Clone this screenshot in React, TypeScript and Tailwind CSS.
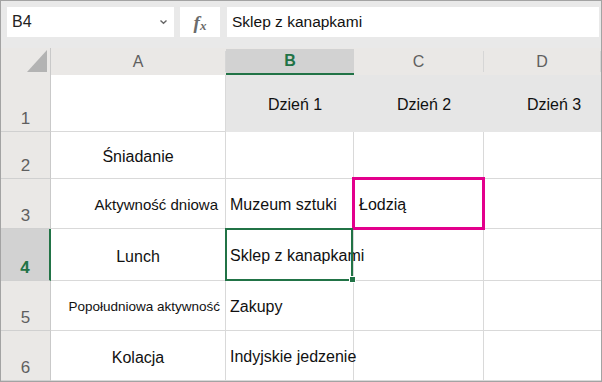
const font = { fontFamily: '"Liberation Sans", Arial, sans-serif' };

const rows = [
  { n: "1", h: "h-[57px]", a: null, b: "Dzień 1", c: "Dzień 2", d: "Dzień 3", shaded: true },
  { n: "2", h: "h-[47px]", a: { t: "Śniadanie", cls: "justify-center text-[16px]" }, b: "", c: "", d: "" },
  { n: "3", h: "h-[50px]", a: { t: "Aktywność dniowa", cls: "justify-end pr-[7px] text-[15px]" }, b: "Muzeum sztuki", c: "Łodzią", d: "" },
  { n: "4", h: "h-[52px]", a: { t: "Lunch", cls: "justify-center text-[16px]" }, b: "Sklep z kanapkami", c: "", d: "" },
  { n: "5", h: "h-[50px]", a: { t: "Popołudniowa aktywność", cls: "justify-end pr-[5px] text-[13.5px]" }, b: "Zakupy", c: "", d: "" },
  { n: "6", h: "h-[50px]", a: { t: "Kolacja", cls: "justify-center text-[16px]" }, b: "Indyjskie jedzenie", c: "", d: "" },
];

function ColHeader({ label, selected }: { label: string; selected?: boolean }) {
  if (selected) {
    return (
      <div className="flex h-full flex-col pt-px">
        <div className="flex flex-1 items-center justify-center bg-[#d2d2d2] text-[16px] font-bold text-[#217346]">
          {label}
        </div>
        <div className="h-[2px] bg-[#217346]" />
      </div>
    );
  }
  return (
    <div className="flex h-full items-center py-[3px]">
      <div className="flex h-full flex-1 items-center justify-center border-r border-[#d6d6d6] text-[16px] text-[#5f5f5f]">
        {label}
      </div>
    </div>
  );
}

export default function App() {
  return (
    <div className="h-[382px] w-[602px] overflow-hidden border border-[#a3a3a3] bg-white text-[#111]" style={font}>
      {/* formula bar */}
      <div className="flex h-[47px] items-start gap-[6px] bg-[#e9e9e9] pl-[6px] pr-[2px] pt-[6px]">
        <div className="flex h-[30px] w-[167px] items-center justify-between bg-white pl-[5px] pr-[6px] text-[16px] text-[#222]">
          <span>B4</span>
          <svg width="9" height="6" viewBox="0 0 9 6" className="mb-[1px]">
            <path d="M1.5 1.5 L4.5 4.3 L7.5 1.5" fill="none" stroke="#666" strokeWidth="1.4" />
          </svg>
        </div>
        <div
          className="flex h-[30px] w-[40px] items-center justify-center bg-white italic text-[#6b6b6b]"
          style={{ fontFamily: '"Liberation Serif", "Times New Roman", serif' }}
        >
          <span className="text-[19px] font-bold leading-none">f</span>
          <span className="mt-[7px] text-[13px] font-bold leading-none">x</span>
        </div>
        <div className="ml-px flex h-[30px] flex-1 items-center bg-white pl-[5px] text-[15.5px] text-[#111]">
          Sklep z kanapkami
        </div>
      </div>

      {/* sheet */}
      <div className="grid grid-cols-[50px_175px_128px_130px_1fr]">
        {/* header row */}
        <div className="flex h-[27px] items-end justify-end border-r border-[#c9c9c9] bg-[#eae8e6] pb-[3px] pr-[3px]">
          <svg width="20" height="22" viewBox="0 0 20 22">
            <path d="M20 0 L20 22 L0 22 Z" fill="#b3b3b3" />
          </svg>
        </div>
        <div className="h-[27px] bg-[#eae8e6]">
          <ColHeader label="A" />
        </div>
        <div className="h-[27px] bg-[#eae8e6]">
          <ColHeader label="B" selected />
        </div>
        <div className="h-[27px] bg-[#eae8e6]">
          <ColHeader label="C" />
        </div>
        <div className="h-[27px] bg-[#eae8e6]">
          <ColHeader label="D" />
        </div>

        {rows.map((r) => {
          const sel = r.n === "4";
          return [
            <div
              key={r.n + "h"}
              className={`flex ${r.h} items-end justify-center border-b border-[#d0d0d0] pb-[4px] text-[17px] leading-none ${
                sel
                  ? "border-r-[2px] border-r-[#217346] bg-[#d2d2d2] font-bold text-[#217346]"
                  : "border-r border-r-[#c9c9c9] bg-[#eae8e6] text-[#5f5f5f]"
              }`}
            >
              {r.n}
            </div>,
            <div key={r.n + "a"} className={`flex ${r.h} items-center border-b border-r border-[#d9d9d9] pt-[4px] ${r.a ? r.a.cls : ""}`}>
              {r.a && <span className="whitespace-nowrap">{r.a.t}</span>}
            </div>,
            <div
              key={r.n + "b"}
              className={`relative flex ${r.h} items-center pt-[3px] text-[16px] whitespace-nowrap ${
                r.shaded ? "bg-[#e6e6e6] pl-[42px]" : "border-b border-r border-[#d9d9d9] pl-[4px]"
              }`}
            >
              <span className="relative z-10">{r.b}</span>
              {sel && (
                <>
                  <div className="absolute -left-[1px] -top-[1px] -bottom-[1px] right-0 z-20 border-2 border-[#217346]" />
                  <div className="absolute -bottom-[3px] -right-[3px] z-30 h-[7px] w-[7px] border border-white bg-[#217346]" />
                </>
              )}
            </div>,
            <div
              key={r.n + "c"}
              className={`relative flex ${r.h} items-center pt-[3px] text-[16px] whitespace-nowrap ${
                r.shaded ? "bg-[#e6e6e6] pl-[43px]" : "border-b border-r border-[#d9d9d9] pl-[5px]"
              }`}
            >
              {r.c}
              {r.n === "3" && (
                <div className="absolute -left-[2px] -top-[2px] -bottom-[2px] -right-[2px] z-20 border-[3px] border-[#e3008c]" />
              )}
            </div>,
            <div
              key={r.n + "d"}
              className={`flex ${r.h} items-center pt-[3px] text-[16px] whitespace-nowrap ${
                r.shaded ? "bg-[#e6e6e6] pl-[43px]" : "border-b border-[#d9d9d9] pl-[5px]"
              }`}
            >
              {r.d}
            </div>,
          ];
        })}
      </div>
    </div>
  );
}
